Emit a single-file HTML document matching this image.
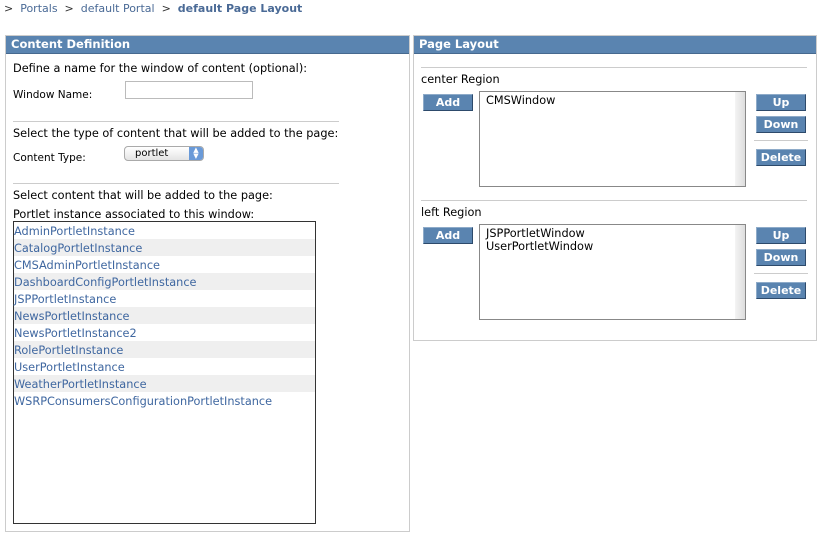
<!DOCTYPE html><html><head><style>
body{margin:0;width:821px;height:536px;background:#fff;font-family:"DejaVu Sans","Liberation Sans",sans-serif;font-size:11.3px;color:#000;position:relative;overflow:hidden}
.a{position:absolute;white-space:nowrap}
.bc{color:#4a6a96;font-size:11px}
.panel{position:absolute;border:1px solid #ccc;background:#fff}
.hd{background:#5a84b0;color:#fff;font-weight:bold;font-size:11.5px;height:17px;line-height:17px;padding-left:5px;border-bottom:1px solid #46698f}
.hr{position:absolute;height:1px;background:#ccc}
.btn{position:absolute;background:#5a84b0;color:#fff;font-weight:bold;font-size:11px;text-align:center;line-height:15px;height:17px;border-right:1px solid #2d4a6b;border-bottom:1px solid #2d4a6b;border-top:1px solid #8eabc9;border-left:1px solid #8eabc9;box-sizing:border-box}
.lb{position:absolute;border:1px solid #888;background:#fff;box-sizing:border-box}
.sb{position:absolute;right:0;top:0;bottom:0;width:10px;background:linear-gradient(to right,#f4f4f4,#ddd)}
.row{height:17px;line-height:19px;color:#3f67a0;padding-left:0}
.row:nth-child(even){background:#efefef}
</style></head><body>
<div class="a bc" style="left:4px;top:2px"><span style="color:#333">&gt;</span>&nbsp; Portals &nbsp;<span style="color:#333">&gt;</span>&nbsp; default Portal &nbsp;<span style="color:#333">&gt;</span>&nbsp; <b>default Page Layout</b></div>

<div class="panel" style="left:5px;top:35px;width:403px;height:495px">
<div class="hd">Content Definition</div></div>
<div class="a" style="left:13px;top:62px">Define a name for the window of content (optional):</div>
<div class="a" style="left:13px;top:89px;font-size:10.5px">Window Name:</div>
<div class="a" style="left:125px;top:81px;width:128px;height:18px;border:1px solid #bbb;box-sizing:border-box"></div>
<div class="hr" style="left:13px;top:121px;width:326px"></div>
<div class="a" style="left:13px;top:127px">Select the type of content that will be added to the page:</div>
<div class="a" style="left:13px;top:152px;font-size:10.5px">Content Type:</div>
<div class="a" style="left:124px;top:146px;width:80px;height:15px;border:1px solid #aaa;border-radius:4px;background:linear-gradient(#fff,#e4e4e4);box-sizing:border-box;font-size:10px;line-height:13px;padding-left:10px">portlet<span style="position:absolute;right:0;top:0;width:14px;height:13px;background:#6a9ad8;border-radius:0 3px 3px 0;color:#fff;font-size:7px;line-height:6px;text-align:center">▲<br>▼</span></div>
<div class="hr" style="left:13px;top:183px;width:326px"></div>
<div class="a" style="left:13px;top:189px">Select content that will be added to the page:</div>
<div class="a" style="left:13px;top:208px">Portlet instance associated to this window:</div>
<div class="lb" style="left:13px;top:221px;width:303px;height:303px;border-color:#333">
<div class="row">AdminPortletInstance</div><div class="row">CatalogPortletInstance</div><div class="row">CMSAdminPortletInstance</div><div class="row">DashboardConfigPortletInstance</div><div class="row">JSPPortletInstance</div><div class="row">NewsPortletInstance</div><div class="row">NewsPortletInstance2</div><div class="row">RolePortletInstance</div><div class="row">UserPortletInstance</div><div class="row">WeatherPortletInstance</div><div class="row">WSRPConsumersConfigurationPortletInstance</div>
</div>

<div class="panel" style="left:413px;top:35px;width:402px;height:304px">
<div class="hd">Page Layout</div></div>
<div class="hr" style="left:421px;top:67px;width:386px"></div>
<div class="a" style="left:421px;top:73px">center Region</div>
<div class="btn" style="left:423px;top:94px;width:50px">Add</div>
<div class="lb" style="left:479px;top:91px;width:267px;height:96px"><div class="a" style="left:6px;top:2px">CMSWindow</div><div class="sb"></div></div>
<div class="btn" style="left:756px;top:94px;width:50px">Up</div>
<div class="btn" style="left:756px;top:116px;width:50px">Down</div>
<div class="hr" style="left:754px;top:140px;width:54px"></div>
<div class="btn" style="left:756px;top:149px;width:50px">Delete</div>
<div class="hr" style="left:421px;top:200px;width:386px"></div>
<div class="a" style="left:421px;top:206px">left Region</div>
<div class="btn" style="left:423px;top:227px;width:50px">Add</div>
<div class="lb" style="left:479px;top:224px;width:267px;height:96px"><div class="a" style="left:6px;top:2px;line-height:13px">JSPPortletWindow<br>UserPortletWindow</div><div class="sb"></div></div>
<div class="btn" style="left:756px;top:227px;width:50px">Up</div>
<div class="btn" style="left:756px;top:249px;width:50px">Down</div>
<div class="hr" style="left:754px;top:273px;width:54px"></div>
<div class="btn" style="left:756px;top:282px;width:50px">Delete</div>
</body></html>
